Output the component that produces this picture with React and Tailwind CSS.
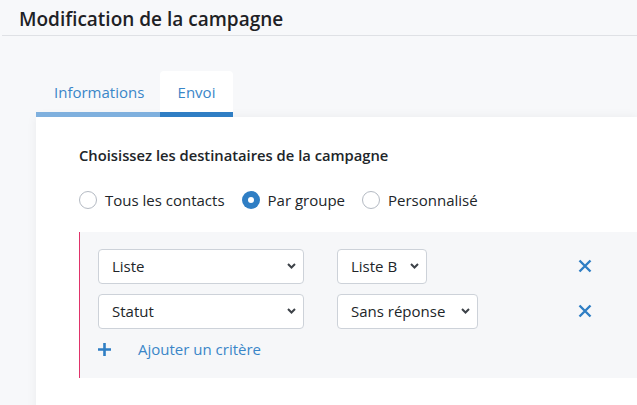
const font = { fontFamily: '"Open Sans", "Noto Sans", sans-serif' }

function Radio({ label, checked }) {
  return (
    <label className="flex items-center gap-2">
      {checked ? (
        <span className="w-[18px] h-[18px] rounded-full bg-[#2f7ec4] flex items-center justify-center">
          <span className="w-[6px] h-[6px] rounded-full bg-white" />
        </span>
      ) : (
        <span className="w-[18px] h-[18px] rounded-full border border-[#b4bac3] bg-white" />
      )}
      <span className="text-[15px] text-[#212529]">{label}</span>
    </label>
  )
}

// chevron plein, comme le select natif
function Chevron() {
  return (
    <svg width="9" height="6" viewBox="0 0 9 6" className="text-[#3d4248]">
      <path d="M1 1 L4.5 4.5 L8 1" fill="none" stroke="currentColor" strokeWidth="2" />
    </svg>
  )
}

function Select({ value, width }) {
  return (
    <div
      className={`h-[35px] ${width} flex items-center justify-between rounded-[4px] border border-[#cdd2d9] bg-white pl-[13px] pr-[7px]`}
    >
      <span className="text-[15px] text-[#212529]">{value}</span>
      <Chevron />
    </div>
  )
}

function Croix() {
  return (
    <svg width="14" height="14" viewBox="0 0 14 14" className="text-[#2f7ec4]">
      <path d="M1.5 1.5 L12.5 12.5 M12.5 1.5 L1.5 12.5" stroke="currentColor" strokeWidth="2.4" />
    </svg>
  )
}

function Plus() {
  return (
    <svg width="13" height="13" viewBox="0 0 13 13" className="text-[#2f7ec4]">
      <path d="M6.5 0 V13 M0 6.5 H13" stroke="currentColor" strokeWidth="2.6" />
    </svg>
  )
}

function Critere({ champ, valeur, largeurValeur }) {
  return (
    <div className="flex items-center">
      <Select value={champ} width="w-[206px]" />
      <div className="w-[274px] pl-[33px]">
        <Select value={valeur} width={largeurValeur} />
      </div>
      <Croix />
    </div>
  )
}

export default function App() {
  return (
    <div className="h-[405px] overflow-hidden bg-[#f7f8fa]" style={font}>
      <div className="ml-[2px] h-[36px] border-b border-[#dfe1e5] pl-[17px] flex items-end pb-[2px]">
        <h1 className="text-[19px] font-semibold text-[#1e2125]">Modification de la campagne</h1>
      </div>

      {/* Onglets */}
      <div className="flex ml-[36px] mt-[35px]">
        <div className="w-[124px] h-[46px] border-b-[5px] border-[#7fb0de] flex items-center pl-[18px] pt-[2px] text-[15px] text-[#3a86c8]">
          Informations
        </div>
        <div className="w-[73px] h-[46px] bg-white rounded-t-[4px] border-b-[5px] border-[#2f7ec4] flex items-center justify-center pt-[2px] text-[15px] text-[#3a86c8]">
          Envoi
        </div>
      </div>

      <div className="ml-[36px] bg-white shadow-[0_0_10px_rgba(0,0,0,0.06)] pl-[43px] pt-[27px] pb-[40px]">
        <p className="text-[14.75px] font-semibold text-[#212529]">Choisissez les destinataires de la campagne</p>

        <div className="flex items-center gap-[17px] mt-[23px]">
          <Radio label="Tous les contacts" />
          <Radio label="Par groupe" checked />
          <Radio label="Personnalisé" />
        </div>

        <div className="mt-[20px] h-[146px] border-l border-[#e0336a] bg-[#f6f7f9] pl-[18px] pt-[17px]">
          <div className="flex flex-col gap-[10px]">
            <Critere champ="Liste" valeur="Liste B" largeurValeur="w-[90px]" />
            <Critere champ="Statut" valeur="Sans réponse" largeurValeur="w-[141px]" />
          </div>
          <div className="flex items-center mt-[10px] h-[22px]">
            <Plus />
            <span className="ml-[27px] text-[15px] text-[#3a86c8]">Ajouter un critère</span>
          </div>
        </div>
      </div>
    </div>
  )
}
